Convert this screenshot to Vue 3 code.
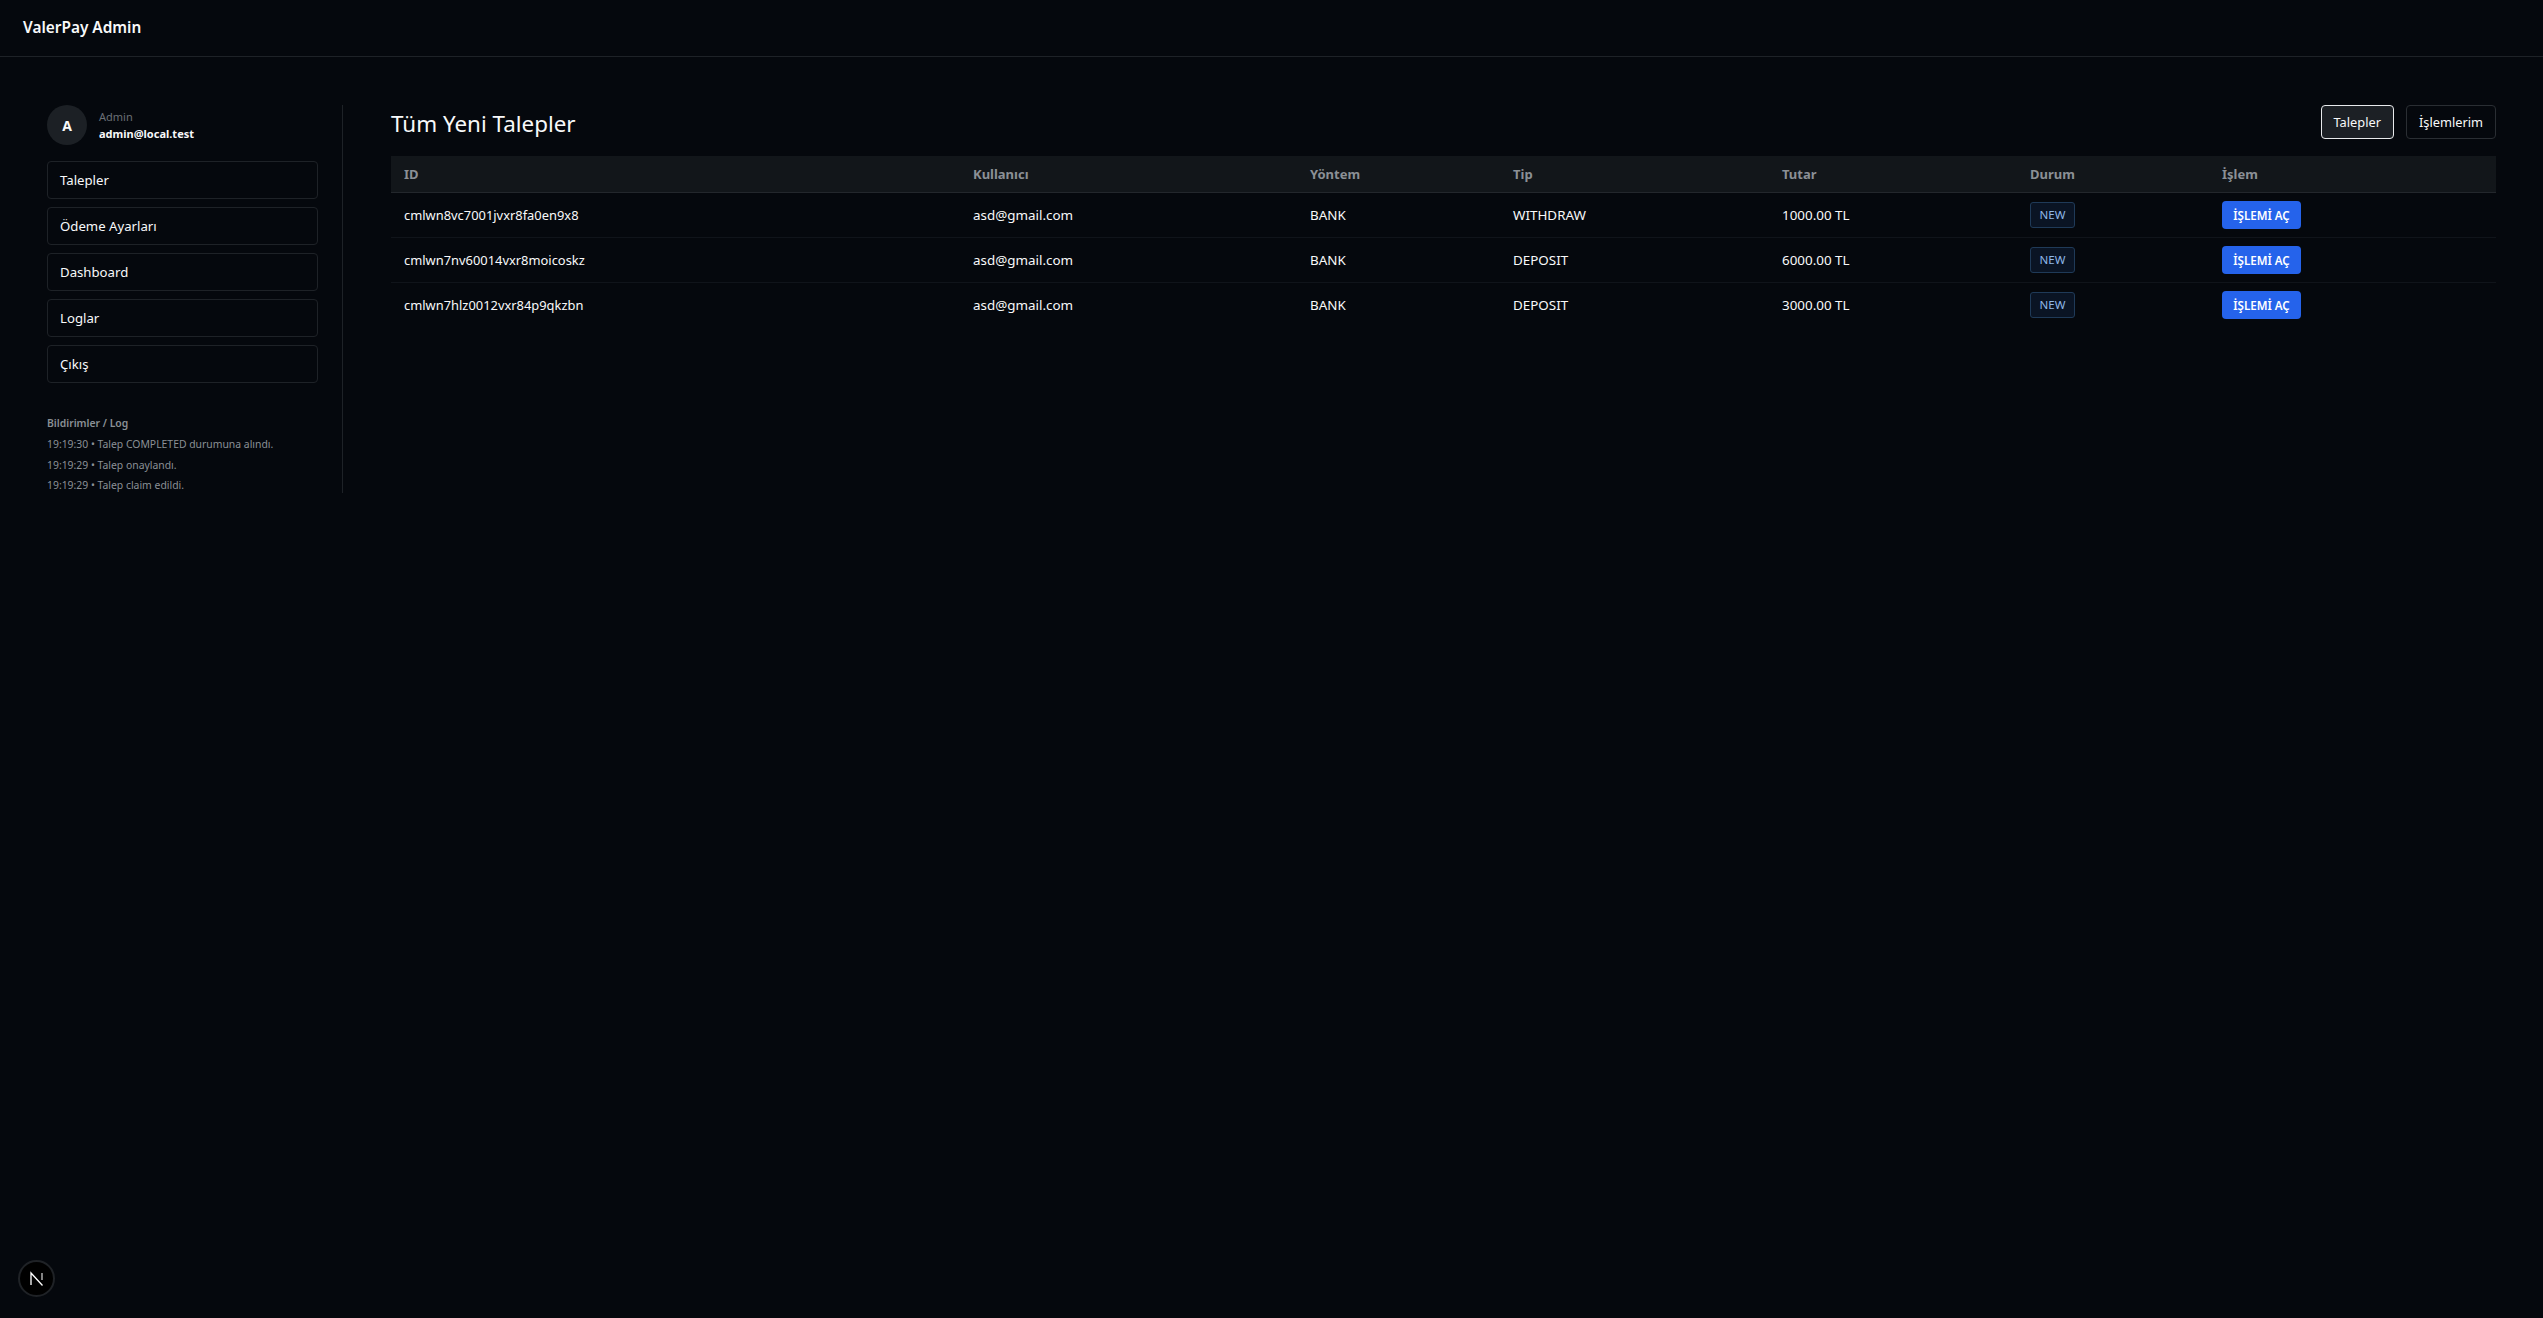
<template>
  <div class="page">
    <header class="topbar">ValerPay Admin</header>

    <div class="layout">
      <aside class="sidebar">
        <div class="profile">
          <div class="avatar">A</div>
          <div>
            <div class="role">Admin</div>
            <div class="email">admin@local.test</div>
          </div>
        </div>

        <nav class="nav">
          <a v-for="item in navItems" :key="item" class="nav-item">{{ item }}</a>
        </nav>

        <div class="log">
          <div class="log-title">Bildirimler / Log</div>
          <div v-for="line in logLines" :key="line" class="log-line">{{ line }}</div>
        </div>
      </aside>

      <main class="content">
        <div class="content-head">
          <h1>Tüm Yeni Talepler</h1>
          <div class="tabs">
            <button class="tab active">Talepler</button>
            <button class="tab">İşlemlerim</button>
          </div>
        </div>

        <table class="requests">
          <colgroup>
            <col class="c-id" />
            <col class="c-user" />
            <col class="c-method" />
            <col class="c-type" />
            <col class="c-amount" />
            <col class="c-status" />
            <col />
          </colgroup>
          <thead>
            <tr>
              <th v-for="col in columns" :key="col">{{ col }}</th>
            </tr>
          </thead>
          <tbody>
            <tr v-for="row in rows" :key="row.id">
              <td class="cell-id">{{ row.id }}</td>
              <td>{{ row.user }}</td>
              <td>{{ row.method }}</td>
              <td>{{ row.type }}</td>
              <td>{{ row.amount }}</td>
              <td><span class="badge">NEW</span></td>
              <td><button class="open-btn">İŞLEMİ AÇ</button></td>
            </tr>
          </tbody>
        </table>
      </main>
    </div>

    <div class="next-badge">
      <svg width="20" height="20" viewBox="0 0 20 20" fill="none">
        <path d="M4 16V4L15.5 16.5" stroke="#fff" stroke-width="1.3" />
        <path d="M15 4V11" stroke="#c8c8c8" stroke-width="1.3" />
      </svg>
    </div>
  </div>
</template>

<script setup>
const navItems = ['Talepler', 'Ödeme Ayarları', 'Dashboard', 'Loglar', 'Çıkış']

const logLines = [
  '19:19:30 • Talep COMPLETED durumuna alındı.',
  '19:19:29 • Talep onaylandı.',
  '19:19:29 • Talep claim edildi.'
]

const columns = ['ID', 'Kullanıcı', 'Yöntem', 'Tip', 'Tutar', 'Durum', 'İşlem']

const rows = [
  { id: 'cmlwn8vc7001jvxr8fa0en9x8', user: 'asd@gmail.com', method: 'BANK', type: 'WITHDRAW', amount: '1000.00 TL' },
  { id: 'cmlwn7nv60014vxr8moicoskz', user: 'asd@gmail.com', method: 'BANK', type: 'DEPOSIT', amount: '6000.00 TL' },
  { id: 'cmlwn7hlz0012vxr84p9qkzbn', user: 'asd@gmail.com', method: 'BANK', type: 'DEPOSIT', amount: '3000.00 TL' }
]
</script>

<style>
html,
body {
  background: #05080d;
}
</style>

<style scoped>
.page {
  position: relative;
  height: 1318px;
  background: #05080d;
  color: #f8f9fa;
  font-family: "Noto Sans", "Open Sans", sans-serif;
  font-size: 14px;
}

.topbar {
  height: 56px;
  box-sizing: content-box;
  padding-left: 23px;
  line-height: 56px;
  font-size: 15.4px;
  font-weight: 600;
  border-bottom: 1px solid #1e2227;
}

.layout {
  display: flex;
  align-items: flex-start;
  padding: 48px 47px 0 47px;
}

.sidebar {
  width: 271px;
  height: 388px;
  padding-right: 24px;
  border-right: 1px solid #1e2227;
  flex-shrink: 0;
}

.profile {
  display: flex;
  align-items: center;
  gap: 12px;
  margin-bottom: 16px;
}

.avatar {
  width: 40px;
  height: 40px;
  border-radius: 50%;
  background: #1c2025;
  display: flex;
  align-items: center;
  justify-content: center;
  font-weight: 700;
  font-size: 14px;
}

.role {
  font-size: 11px;
  line-height: 16px;
  color: #6b7076;
}

.email {
  font-size: 11px;
  line-height: 17px;
  font-weight: 700;
}

.nav {
  display: flex;
  flex-direction: column;
  gap: 8px;
}

.nav-item {
  display: block;
  height: 38px;
  box-sizing: border-box;
  padding-left: 12px;
  line-height: 37px;
  border: 1px solid #1e2227;
  border-radius: 4px;
  font-size: 13.2px;
}

.log {
  margin-top: 32px;
  font-size: 10.4px;
  color: #8b9096;
}

.log-title {
  font-weight: 600;
  line-height: 16px;
  margin-bottom: 3px;
}

.log-line {
  line-height: 20.5px;
}

.content {
  flex: 1;
  padding-left: 48px;
}

.content-head {
  display: flex;
  justify-content: space-between;
  align-items: center;
  height: 34px;
  margin-bottom: 17px;
}

h1 {
  margin: 2px 0 0;
  font-size: 22.4px;
  font-weight: 400;
}

.tabs {
  display: flex;
  gap: 12px;
}

.tab {
  height: 34px;
  padding: 0 12px;
  border: 1px solid #2a2e33;
  border-radius: 4px;
  background: #05080d;
  color: #f8f9fa;
  font-family: inherit;
  font-size: 12.8px;
}

.tab.active {
  background: #1c2025;
  border-color: #e8eaec;
}

.requests {
  width: 100%;
  table-layout: fixed;
  border-collapse: collapse;
}

.c-id { width: 569px; }
.c-user { width: 337px; }
.c-method { width: 203px; }
.c-type { width: 269px; }
.c-amount { width: 248px; }
.c-status { width: 192px; }

th {
  height: 36px;
  padding: 0 13px;
  text-align: left;
  font-size: 13px;
  font-weight: 700;
  color: #8b9096;
  background: #12161a;
  border-bottom: 1px solid #23272c;
}

td {
  height: 44px;
  padding: 0 13px;
  font-size: 13.4px;
  border-bottom: 1px solid #10141a;
}

.cell-id {
  font-size: 12.9px;
}

tbody tr:last-child td {
  border-bottom: none;
}

.badge {
  display: inline-block;
  height: 26px;
  box-sizing: border-box;
  padding: 0 8.5px;
  line-height: 24px;
  font-size: 11.5px;
  color: #8fb8e8;
  background: #0a1424;
  border: 1px solid #1f3a58;
  border-radius: 3px;
  vertical-align: middle;
}

.open-btn {
  height: 28px;
  width: 79px;
  padding: 0;
  border: none;
  border-radius: 4px;
  background: #2563eb;
  color: #fff;
  font-family: inherit;
  font-size: 11.6px;
  font-weight: 600;
  vertical-align: middle;
}

.next-badge {
  position: absolute;
  left: 18px;
  top: 1260px;
  width: 37px;
  height: 37px;
  box-sizing: border-box;
  border-radius: 50%;
  background: #000;
  border: 2px solid #1f2226;
  display: flex;
  align-items: center;
  justify-content: center;
}
</style>
